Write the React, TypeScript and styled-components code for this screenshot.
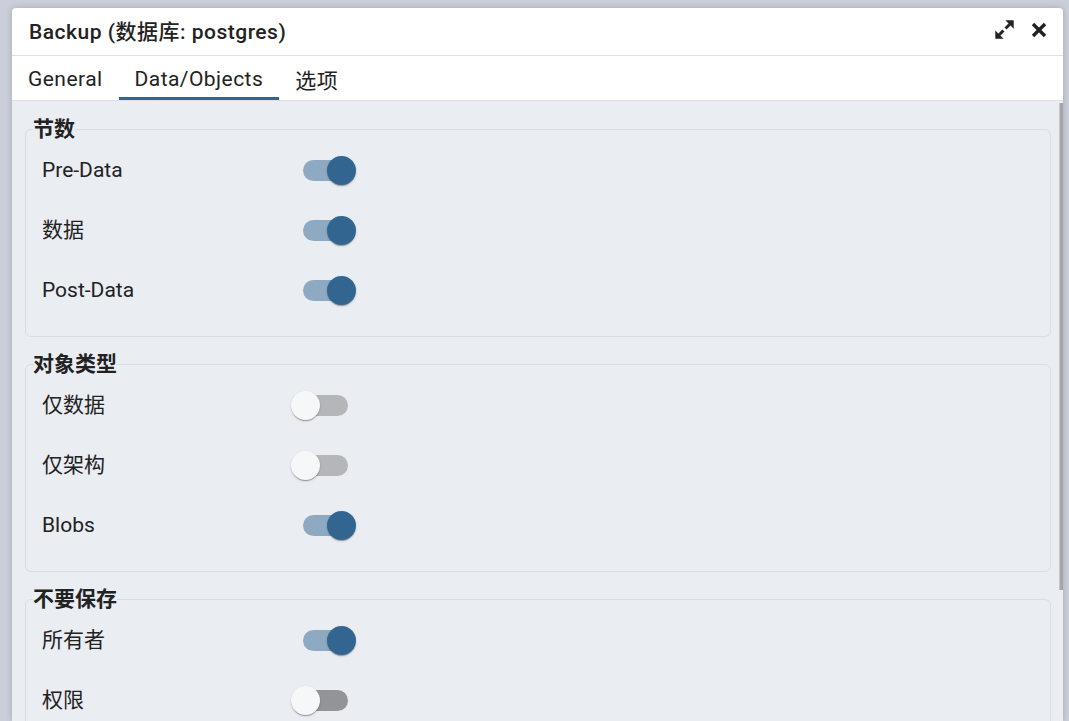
import React from "react";
import styled, { createGlobalStyle } from "styled-components";

const GlobalStyle = createGlobalStyle`
  html, body {
    margin: 0;
    padding: 0;
    height: 100%;
    overflow: hidden;
    background: #cbcfd9;
  }
  body {
    font-family: Roboto, "Noto Sans CJK SC", sans-serif;
    color: #222;
  }
`;

const Page = styled.div`
  height: 721px;
  box-sizing: border-box;
  padding: 8px 6px 0 12px;
  display: flex;
`;

const Dialog = styled.div`
  flex: 1;
  min-width: 0;
  display: flex;
  flex-direction: column;
  background: #fff;
  border-radius: 4px 4px 0 0;
  box-shadow: 0 0 6px rgba(40, 50, 70, 0.25);
  overflow: hidden;
`;

const Header = styled.div`
  height: 48px;
  flex-shrink: 0;
  display: flex;
  align-items: center;
  padding: 0 16px 4px 17px;
  box-sizing: border-box;
  border-bottom: 1px solid #dde0e6;
`;

const Title = styled.div`
  flex: 1;
  font-size: 21px;
  letter-spacing: 0.5px;
  font-weight: 500;
  color: #222;
`;

const HeaderActions = styled.div`
  display: flex;
  align-items: center;
  gap: 16px;
`;

const IconButton = styled.span`
  display: flex;
  align-items: center;
  justify-content: center;
  color: #222;
`;

const TabBar = styled.div`
  height: 45px;
  flex-shrink: 0;
  display: flex;
  box-sizing: border-box;
  border-bottom: 1px solid #dde0e6;
`;

const Tab = styled.div<{ $active?: boolean }>`
  height: 44px;
  box-sizing: border-box;
  padding: 4px 16px 0;
  display: flex;
  align-items: center;
  font-size: 21px;
  letter-spacing: 0.45px;
  color: #222;
  border-bottom: 3px solid ${(p) => (p.$active ? "#326690" : "transparent")};
`;

const Content = styled.div`
  flex: 1;
  min-height: 0;
  display: flex;
  background: #eaedf2;
`;

const Scroller = styled.div`
  flex: 1;
  min-width: 0;
  overflow: hidden;
  padding: 17px 8px 24px 13px;
`;

const ScrollRail = styled.div`
  width: 4px;
  flex-shrink: 0;
  padding-top: 2px;
`;

const ScrollThumb = styled.div`
  height: 487px;
  background: #a6a6a6;
  border-left: 1px solid #c4c6ca;
  box-sizing: border-box;
`;

const Section = styled.fieldset`
  margin: 0 0 16px;
  border: 1px solid #dadde3;
  border-radius: 6px;
  padding: 0 16px 16px;
  min-width: 0;
`;

const Legend = styled.legend`
  padding: 0;
  margin-left: -9px;
  font-size: 21px;
  line-height: 22px;
  font-weight: 700;
  color: #222;
`;

const Row = styled.div`
  height: 60px;
  display: flex;
  align-items: center;
`;

const Label = styled.div`
  width: 249px;
  flex-shrink: 0;
  font-size: 21px;
  line-height: 24px;
  color: #222;
`;

const SwitchBox = styled.span`
  position: relative;
  width: 66px;
  height: 29px;
  flex-shrink: 0;
`;

const Track = styled.span<{ $on: boolean; $dark?: boolean }>`
  position: absolute;
  left: 12px;
  top: 4px;
  width: 45px;
  height: 21px;
  border-radius: 11px;
  background: ${(p) => (p.$on ? "#8eaac2" : p.$dark ? "#939498" : "#b5b6ba")};
`;

const Thumb = styled.span<{ $on: boolean }>`
  position: absolute;
  top: 0;
  left: ${(p) => (p.$on ? "36px" : "0")};
  width: 29px;
  height: 29px;
  border-radius: 50%;
  background: ${(p) => (p.$on ? "#326690" : "#f6f7f9")};
  box-shadow: 0 2px 1px -1px rgba(0, 0, 0, 0.2), 0 1px 1px 0 rgba(0, 0, 0, 0.14),
    0 1px 3px 0 rgba(0, 0, 0, 0.12);
`;

type Item = { label: string; on: boolean; dark?: boolean };

const sections: { title: string; items: Item[] }[] = [
  {
    title: "节数",
    items: [
      { label: "Pre-Data", on: true },
      { label: "数据", on: true },
      { label: "Post-Data", on: true },
    ],
  },
  {
    title: "对象类型",
    items: [
      { label: "仅数据", on: false },
      { label: "仅架构", on: false },
      { label: "Blobs", on: true },
    ],
  },
  {
    title: "不要保存",
    items: [
      { label: "所有者", on: true },
      { label: "权限", on: false, dark: true },
      { label: "表空间", on: false },
      { label: "未记录的表数据", on: false },
    ],
  },
];

const Switch = ({ on, dark }: { on: boolean; dark?: boolean }) => (
  <SwitchBox>
    <Track $on={on} $dark={dark} />
    <Thumb $on={on} />
  </SwitchBox>
);

const ExpandIcon = () => (
  <svg width="21" height="21" viewBox="0 0 24 24" fill="currentColor">
    <polygon points="22.5,1.5 22.5,11 13,1.5" />
    <line x1="18" y1="6" x2="13.2" y2="10.8" stroke="currentColor" strokeWidth="3.4" />
    <polygon points="1.5,22.5 1.5,13 11,22.5" />
    <line x1="6" y1="18" x2="10.8" y2="13.2" stroke="currentColor" strokeWidth="3.4" />
  </svg>
);

const CloseIcon = () => (
  <svg width="16" height="16" viewBox="0 0 16 16">
    <path d="M2 2 L14 14 M14 2 L2 14" stroke="currentColor" strokeWidth="3.4" />
  </svg>
);

const App = () => {
  return (
    <>
      <GlobalStyle />
      <Page>
        <Dialog>
          <Header>
            <Title>Backup (数据库: postgres)</Title>
            <HeaderActions>
              <IconButton>
                <ExpandIcon />
              </IconButton>
              <IconButton>
                <CloseIcon />
              </IconButton>
            </HeaderActions>
          </Header>
          <TabBar>
            <Tab>General</Tab>
            <Tab $active>Data/Objects</Tab>
            <Tab>选项</Tab>
          </TabBar>
          <Content>
            <Scroller>
              {sections.map((s) => (
                <Section key={s.title}>
                  <Legend>{s.title}</Legend>
                  {s.items.map((it) => (
                    <Row key={it.label}>
                      <Label>{it.label}</Label>
                      <Switch on={it.on} dark={it.dark} />
                    </Row>
                  ))}
                </Section>
              ))}
            </Scroller>
            <ScrollRail>
              <ScrollThumb />
            </ScrollRail>
          </Content>
        </Dialog>
      </Page>
    </>
  );
};

export default App;
